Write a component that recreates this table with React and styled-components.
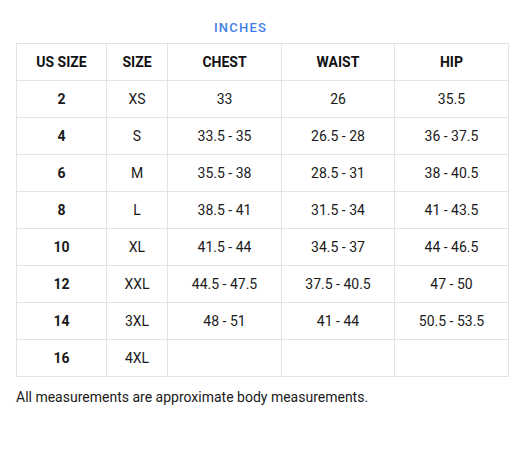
import React from "react";
import styled, { createGlobalStyle } from "styled-components";

const Global = createGlobalStyle`
  html, body { margin: 0; padding: 0; background: #fff; }
  body { font-family: Roboto, "Liberation Sans", sans-serif; color: #1a1a1a; }
`;

const Page = styled.div`
  padding: 20px 19px 0 16px;
  width: 493px;
`;

const Caption = styled.div`
  text-align: center;
  color: #3f7ee8;
  font-size: 13px;
  letter-spacing: 1.2px;
  font-weight: 500;
  line-height: 16px;
  margin-bottom: 7px;
  padding-right: 44px;
`;

const Table = styled.table`
  width: 493px;
  border-collapse: collapse;
  table-layout: fixed;
`;

const Th = styled.th`
  border: 1px solid #e3e3e3;
  height: 36px;
  padding: 0;
  font-size: 14px;
  font-weight: 700;
  color: #111;
  text-align: center;
`;

const Td = styled.td`
  border: 1px solid #e3e3e3;
  height: 36px;
  padding: 0;
  font-size: 14px;
  font-weight: ${(p) => (p.$bold ? 700 : 400)};
  color: #1a1a1a;
  text-align: center;
`;

const Note = styled.p`
  margin: 12px 0 0;
  font-size: 14px;
  color: #1a1a1a;
`;

const rows = [
  ["2", "XS", "33", "26", "35.5"],
  ["4", "S", "33.5 - 35", "26.5 - 28", "36 - 37.5"],
  ["6", "M", "35.5 - 38", "28.5 - 31", "38 - 40.5"],
  ["8", "L", "38.5 - 41", "31.5 - 34", "41 - 43.5"],
  ["10", "XL", "41.5 - 44", "34.5 - 37", "44 - 46.5"],
  ["12", "XXL", "44.5 - 47.5", "37.5 - 40.5", "47 - 50"],
  ["14", "3XL", "48 - 51", "41 - 44", "50.5 - 53.5"],
  ["16", "4XL", "", "", ""],
];

export default function App() {
  return (
    <Page>
      <Global />
      <Caption>INCHES</Caption>
      <Table>
        <colgroup>
          <col style={{ width: 90 }} />
          <col style={{ width: 61 }} />
          <col style={{ width: 114 }} />
          <col style={{ width: 113 }} />
          <col style={{ width: 114 }} />
        </colgroup>
        <thead>
          <tr>
            <Th>US SIZE</Th>
            <Th>SIZE</Th>
            <Th>CHEST</Th>
            <Th>WAIST</Th>
            <Th>HIP</Th>
          </tr>
        </thead>
        <tbody>
          {rows.map((r) => (
            <tr key={r[0]}>
              {r.map((c, i) => (
                <Td key={i} $bold={i === 0}>{c}</Td>
              ))}
            </tr>
          ))}
        </tbody>
      </Table>
      <Note>All measurements are approximate body measurements.</Note>
    </Page>
  );
}
